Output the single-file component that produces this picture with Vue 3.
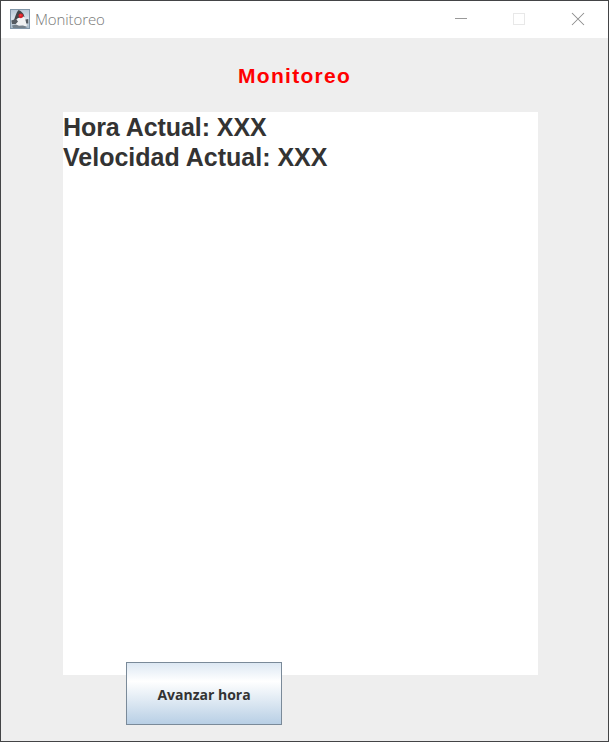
<script setup>
import { ref } from 'vue'

const title = 'Monitoreo'
const hora = ref('XXX')
const velocidad = ref('XXX')
</script>

<template>
  <div class="window">
    <header class="titlebar">
      <svg class="app-icon" width="20" height="20" viewBox="0 0 20 20">
        <defs>
          <linearGradient id="sky" x1="0" y1="0" x2="0" y2="1">
            <stop offset="0" stop-color="#b3c5d4" />
            <stop offset=".5" stop-color="#dbe5ed" />
            <stop offset="1" stop-color="#a3b6c6" />
          </linearGradient>
        </defs>
        <rect width="20" height="20" fill="url(#sky)" />
        <rect x=".5" y=".5" width="19" height="19" fill="none" stroke="#8196a8" />
        <path d="M8.2 1.2 C9.5 .8 11.5 2.5 13.5 5 L14.5 8 L12 9.5 L8 9 L5.5 11.5 L3.8 12 C5 8 6.2 4 8.2 1.2Z" fill="#43474b" />
        <path d="M6 11 L9 8.8 L14 7.5 L16 12 L17 17.8 L12.5 16.8 L9 17 L5 18Z" fill="#f0f1f2" />
        <path d="M1.3 11.5 L6 10 L8 12.5 L5.8 15 L2 15Z M15.4 10.5 L18.3 10 L18.3 14.5 L16.3 14.5Z" fill="#555b61" />
        <path d="M2 16.5 L6 15.5 L9 16.7 L13 16.5 L17.5 18 L15 19 H3Z" fill="#75818b" />
        <circle cx="10.8" cy="6.8" r="2.4" fill="#d5202a" />
        <circle cx="10.6" cy="6.3" r="1" fill="#f5403c" />
      </svg>
      <span class="caption">{{ title }}</span>
      <div class="controls">
        <svg width="58" height="37" viewBox="0 0 58 37" shape-rendering="crispEdges">
          <path d="M23 17.5H35" stroke="#999" />
        </svg>
        <svg width="58" height="37" viewBox="0 0 58 37" shape-rendering="crispEdges">
          <rect x="23.5" y="12.5" width="11" height="11" fill="none" stroke="#e8e8e8" />
        </svg>
        <svg width="59" height="37" viewBox="0 0 59 37">
          <path d="M24 12L36 24M36 12L24 24" stroke="#8c8c8c" stroke-width="1.05" />
        </svg>
      </div>
    </header>
    <main class="content">
      <h1 class="heading">{{ title }}</h1>
      <section class="panel">
        <div class="hour">Hora Actual: {{ hora }}</div>
        <div>Velocidad Actual: {{ velocidad }}</div>
      </section>
      <button class="advance" type="button">Avanzar hora</button>
    </main>
  </div>
</template>

<style>
body {
  margin: 0;
}
</style>

<style scoped>
.window {
  box-sizing: border-box;
  width: 609px;
  height: 742px;
  border: 1px solid #434446;
  background: #eee;
  display: flex;
  flex-direction: column;
  overflow: hidden;
}
.titlebar {
  box-sizing: border-box;
  height: 37px;
  flex: none;
  background: #fff;
  display: flex;
  align-items: flex-start;
  padding: 0 1px 0 9px;
}
.app-icon {
  display: block;
  margin-top: 8px;
}
.caption {
  margin: 8px 0 0 5px;
  font: 300 15px/20px "Open Sans", "Noto Sans", sans-serif;
  letter-spacing: -0.1px;
  color: #777;
}
.controls {
  display: flex;
  margin-left: auto;
}
.controls svg {
  display: block;
}
.content {
  display: flex;
  flex-direction: column;
  align-items: flex-start;
  padding: 26px 0 0 62px;
}
.heading {
  margin: 0 0 0 175px;
  font: bold 21px/24px "Liberation Sans", Arial, sans-serif;
  letter-spacing: 1.3px;
  color: #f00;
}
.panel {
  width: 475px;
  height: 563px;
  margin-top: 24px;
  background: #fff;
  color: #333;
  font: bold 25px/30px "Liberation Sans", Arial, sans-serif;
  white-space: nowrap;
}
.hour {
  letter-spacing: -0.06px;
}
.advance {
  box-sizing: border-box;
  width: 156px;
  height: 63px;
  margin: -13px 0 0 63px;
  padding: 2px 0 0;
  position: relative;
  border: 1px solid #7a8a99;
  border-radius: 0;
  background: linear-gradient(#dde8f3, #fff 30%, #b8cfe5);
  color: #333;
  font: bold 14px/20px "Open Sans", "Noto Sans", sans-serif;
}
</style>
